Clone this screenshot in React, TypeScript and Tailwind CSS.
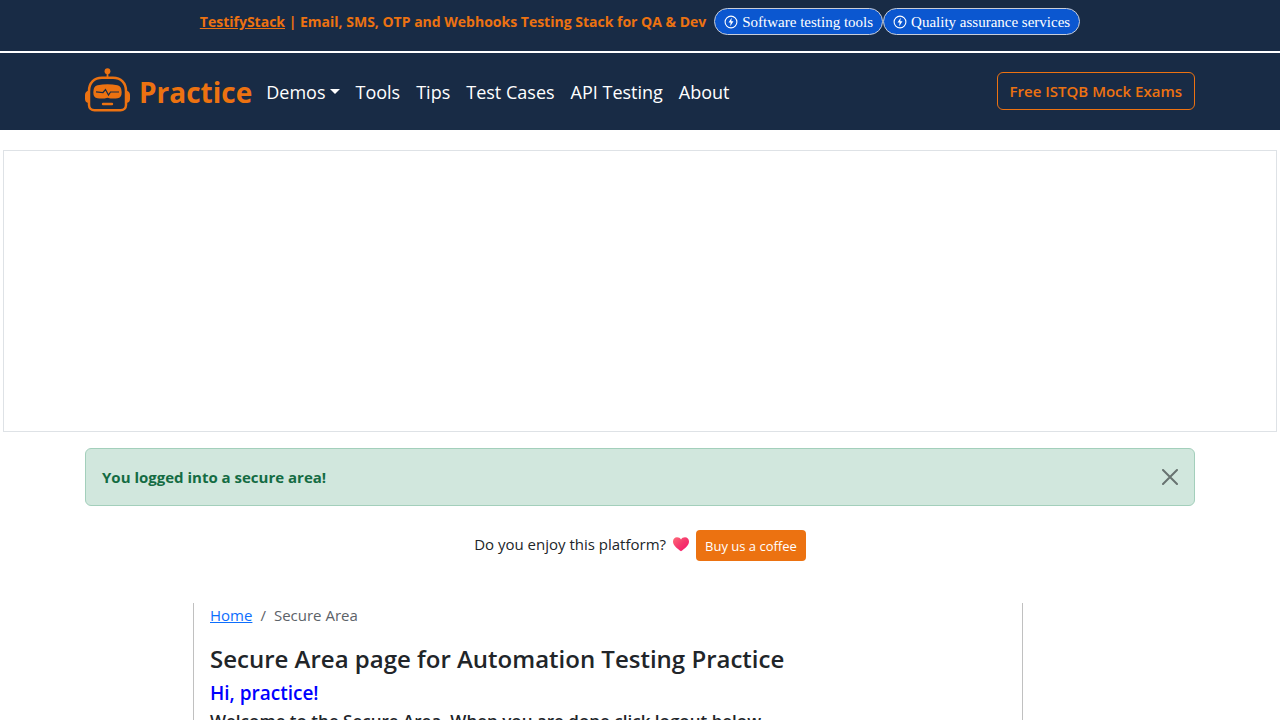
import { useState } from "react";

const navItems = ["Tools", "Tips", "Test Cases", "API Testing", "About"];
const promos = ["Software testing tools", "Quality assurance services"];

function BoltIcon() {
  return (
    <svg viewBox="0 0 14 14" className="h-3.5 w-3.5" aria-hidden="true">
      <circle cx="7" cy="7" r="5.9" fill="none" stroke="white" strokeWidth="1.1" />
      <path d="M7.7 2.8 4.5 7.6H6.6L6.2 11.2 9.5 6.3H7.3Z" fill="white" />
    </svg>
  );
}

function RobotLogo() {
  return (
    <svg viewBox="0 0 46 48" className="h-12 w-[46px]" fill="none" aria-hidden="true">
      <circle cx="22.5" cy="3.2" r="2.9" fill="#ec7211" />
      <path d="M22.5 5V11" stroke="#ec7211" strokeWidth="1.8" />
      <path
        d="M17 9.8H28C36 9.8 41 15 41 23V37C41 40 38.5 42.2 35.5 42.2H9.500C6.500 42.2 4 40 4 37V23C4 15 9 9.8 17 9.8Z"
        stroke="#ec7211"
        strokeWidth="2.5"
      />
      <path d="M5 22.5H3.5Q0 23.5 0 27V31Q0 34.500 3.500 35H5ZM40 22.5H41.5Q45 23.5 45 27V31Q45 34.500 41.500 35H40Z" fill="#ec7211" />
      <path
        d="M12.5 17.2Q22.5 15.2 32.5 17.2Q36.7 18 36.7 24.2Q36.7 29.7 32.5 30.3Q27 31 22.5 29.7Q18 31 12.5 30.3Q8.300 29.7 8.300 24.2Q8.300 18 12.5 17.2Z"
        fill="#ec7211"
      />
      <path d="M11 23.8 18 24.5 20.5 21.5 23.5 27 25.5 24H34" stroke="#182b45" strokeWidth="1.2" />
      <path d="M18 36H27" stroke="#ec7211" strokeWidth="2.4" strokeLinecap="round" />
    </svg>
  );
}

function Heart() {
  return (
    <svg viewBox="0 0 18 16" className="h-4 w-[18px]" role="img" aria-label="heart">
      <defs>
        <linearGradient id="heart" x1="0" y1="0" x2="1" y2="1">
          <stop offset="0" stopColor="#ff6a78" />
          <stop offset="0.5" stopColor="#f5386d" />
          <stop offset="1" stopColor="#f8126c" />
        </linearGradient>
      </defs>
      <path d="M9 15.2C5 12.5 1 9.5 1 5.5C1 2.8 2.8 1.2 5 1.2C6.8 1.2 8.2 2 9 3.5C9.8 2 11.2 1.2 13 1.2C15.2 1.2 17 2.8 17 5.5C17 9.5 13 12.5 9 15.2Z" fill="url(#heart)" />
    </svg>
  );
}

export default function App() {
  const [alertOpen, setAlertOpen] = useState(true);
  return (
    <div className="h-screen overflow-hidden bg-white font-['Open_Sans',sans-serif] text-[15px] leading-6 text-[#212529]">
      <div className="flex justify-center border-b-2 border-white bg-[#182b45] pt-2 pb-4">
        <p className="mr-2 text-sm leading-[27px] font-bold text-[#ec7211]">
          <a href="#" className="underline">TestifyStack</a> | Email, SMS, OTP and Webhooks Testing Stack for QA &amp; Dev
        </p>
        {promos.map((label) => (
          <a
            key={label}
            href="#"
            className="flex h-[27px] items-center gap-1 rounded-full border border-[#c8cdd8] bg-[#0b57d0] px-[9px] font-['Liberation_Serif',serif] text-[15px] text-white"
          >
            <BoltIcon />
            {label}
          </a>
        ))}
      </div>

      <header className="bg-[#182b45]">
        <div className="mx-auto flex h-[77px] max-w-[1110px] items-center">
          <a href="#" className="mr-3.5 flex items-center gap-2 text-[28px] font-bold text-[#ec7211]">
            <RobotLogo />
            Practice
          </a>
          <nav className="flex gap-4 text-lg text-white">
            <button type="button" className="flex items-center gap-1">
              Demos
              <svg viewBox="0 0 10 5" className="h-[5px] w-2.5" fill="currentColor" aria-hidden="true">
                <path d="M0 0H10L5 5Z" />
              </svg>
            </button>
            {navItems.map((item) => (
              <a key={item} href="#">{item}</a>
            ))}
          </nav>
          <a href="#" className="mb-0.5 ml-auto rounded-md border border-[#ec7211] px-3 py-1.5 font-semibold text-[#ec7211]">
            Free ISTQB Mock Exams
          </a>
        </div>
      </header>

      <div className="mx-[3px] mt-5 h-[282px] border border-[#dee2e6]" />

      <main className="mx-auto max-w-[1110px] pt-4">
        {alertOpen && (
          <div role="alert" className="flex items-center justify-between rounded-md border border-[#a3cfbb] bg-[#d1e7dd] p-4 text-[#146c43]">
            <b>You logged into a secure area!</b>
            <button type="button" aria-label="Close" onClick={() => setAlertOpen(false)} className="text-[#687370]">
              <svg viewBox="0 0 16 16" className="h-4 w-4" fill="none" stroke="currentColor" strokeWidth="2" strokeLinecap="round" aria-hidden="true">
                <path d="M1 1 15 15M15 1 1 15" />
              </svg>
            </button>
          </div>
        )}

        <div className="mt-6 flex items-center justify-center">
          <div className="flex items-center gap-1.5 pb-1">
            Do you enjoy this platform?
            <Heart />
          </div>
          <a href="#" className="ml-1.5 rounded bg-[#ec7211] px-[9px] pt-1.5 pb-1 text-[13px] leading-[21px] text-white">Buy us a coffee</a>
        </div>

        <div className="mt-[42px] grid grid-cols-[108fr_830fr_172fr]">
          <section className="col-start-2 border-x border-[#c0c0c0] px-4 pb-10">
            <nav aria-label="Breadcrumb" className="flex gap-2 text-[#5c6268]">
              <a href="#" className="text-[#0d6efd] underline">Home</a>
              <span>/</span>
              <span>Secure Area</span>
            </nav>
            <h1 className="mt-4 text-2xl font-semibold">Secure Area page for Automation Testing Practice</h1>
            <h2 className="mt-1 text-[19px] leading-7 font-semibold text-[#0000ff]">Hi, practice!</h2>
            <h3 className="text-[17px] leading-7 font-semibold">Welcome to the Secure Area. When you are done click logout below.</h3>
          </section>
        </div>
      </main>
    </div>
  );
}
